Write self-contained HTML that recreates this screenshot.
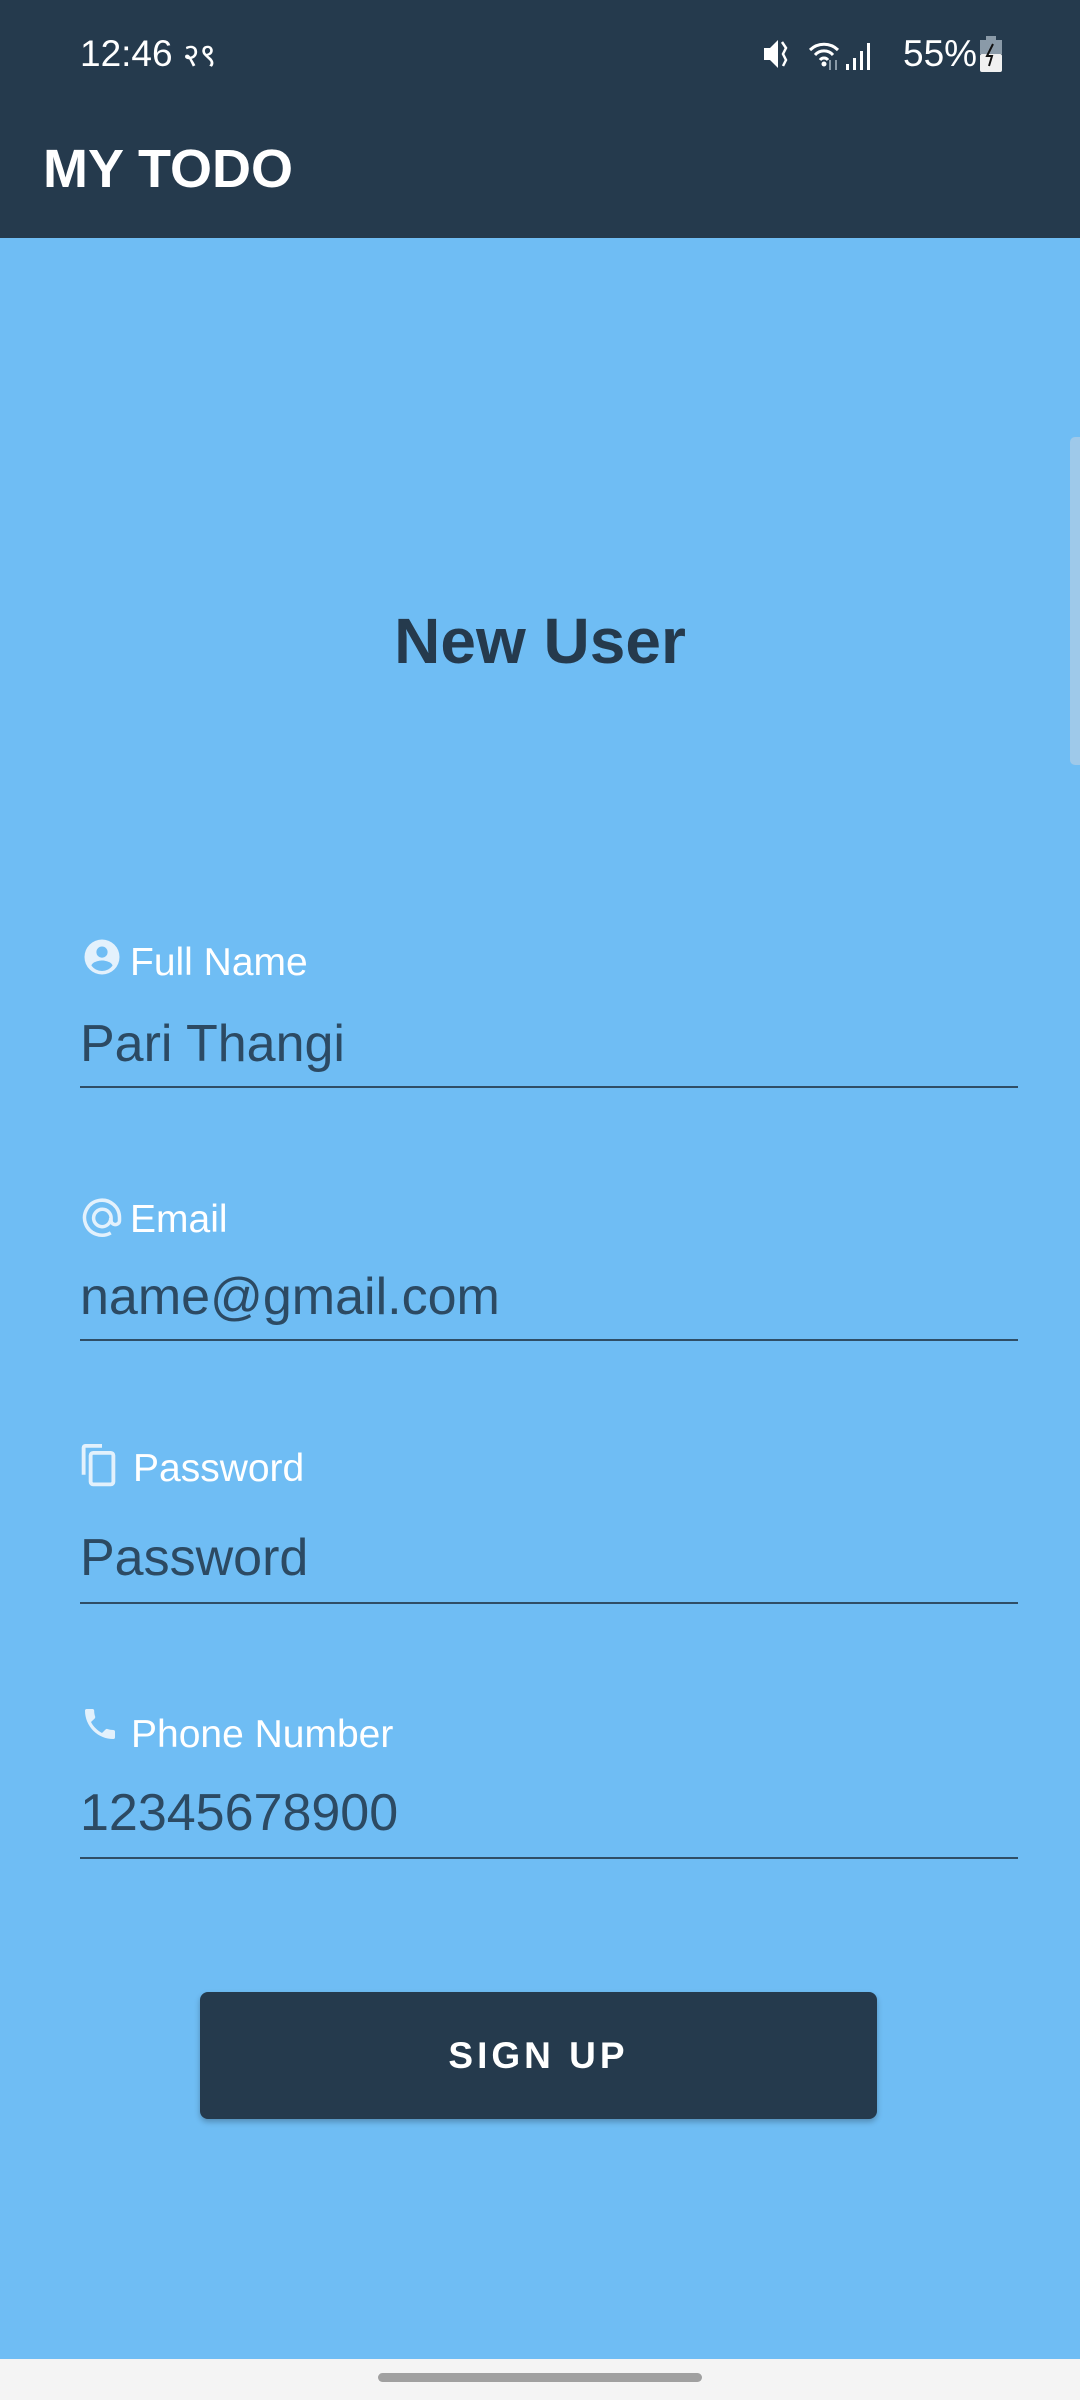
<!DOCTYPE html>
<html><head><meta charset="utf-8"><style>
*{margin:0;padding:0;box-sizing:border-box}
body{width:1080px;height:2400px;background:#6fbdf4;font-family:"Liberation Sans",sans-serif;position:relative;overflow:hidden}
.top{position:absolute;left:0;top:0;width:1080px;height:238px;background:#253a4d}
.abs{position:absolute;white-space:nowrap}
.lbl{color:#fff;font-size:39px;line-height:1}
.val{color:#2c4a63;font-size:52px;line-height:1}
.line{position:absolute;left:80px;width:938px;height:2px;background:#2f4e66}
</style></head><body>
<div class="top"></div>
<div class="abs" style="left:80px;top:33px;color:#fff;font-size:37px;">12:46 <span style="font-family:'DejaVu Sans',sans-serif;font-size:32px">२९</span></div>
<svg class="abs" style="left:760px;top:36px" width="250" height="36" viewBox="0 0 250 36">
<path d="M4 12h6l8-8v28l-8-8H4z" fill="#fff"/><path d="M22 6l4 6-3 6 3 6-3 6" stroke="#fff" stroke-width="2.5" fill="none"/>
<path d="M50 14a20 20 0 0 1 28 0M55 19a12 12 0 0 1 18 0M60 24a5 5 0 0 1 8 0" stroke="#fff" stroke-width="3" fill="none"/><circle cx="64" cy="28" r="2.5" fill="#fff"/>
<path d="M70 24v10M76 34V24" stroke="#8a9aa8" stroke-width="2"/>
<rect x="86" y="28" width="3" height="6" fill="#fff"/><rect x="93" y="22" width="3" height="12" fill="#fff"/><rect x="100" y="15" width="3" height="19" fill="#fff"/><rect x="107" y="7" width="3" height="27" fill="#fff"/>
</svg>
<div class="abs" style="left:903px;top:33px;color:#fff;font-size:37px;">55%</div>
<svg class="abs" style="left:978px;top:36px" width="26" height="36" viewBox="0 0 26 36"><rect x="8" y="0" width="10" height="4" fill="#8a9aa8"/><rect x="2" y="4" width="22" height="14" fill="#8a9aa8"/><rect x="2" y="18" width="22" height="18" rx="2" fill="#f0f0f0"/><path d="M15 8l-6 12h5l-3 10" stroke="#111" stroke-width="2" fill="none"/></svg>
<div class="abs" style="left:43px;top:138px;color:#fff;font-size:54px;font-weight:bold;">MY TODO</div>
<div class="abs" style="left:1070px;top:437px;width:10px;height:328px;background:#9ec9ea;border-radius:5px 0 0 5px"></div>
<div class="abs" style="left:0;width:1080px;top:604px;text-align:center;color:#253a4d;font-size:64px;font-weight:bold;">New User</div>

<svg class="abs" style="left:81px;top:936px" width="42" height="42" viewBox="0 0 24 24"><path fill="#e3f1fc" d="M12 2a10 10 0 1 0 0 20 10 10 0 0 0 0-20zm0 4a3.2 3.2 0 1 1 0 6.4A3.2 3.2 0 0 1 12 6zm0 14a7.7 7.7 0 0 1-6-3c.1-2 4-3 6-3s5.9 1 6 3a7.7 7.7 0 0 1-6 3z"/></svg>
<div class="abs lbl" style="left:130px;top:943px">Full Name</div>
<div class="abs val" style="left:80px;top:1018px">Pari Thangi</div>
<div class="line" style="top:1086px"></div>

<svg class="abs" style="left:81px;top:1197px" width="42" height="42" viewBox="0 0 24 24"><path fill="none" stroke="#e3f1fc" stroke-width="2" d="M17 20.5A10 10 0 1 1 22 12v1.4a2.4 2.4 0 0 1-4.8 0V12A5 5 0 1 0 12 17a5 5 0 0 0 5-5"/></svg>
<div class="abs lbl" style="left:130px;top:1200px">Email</div>
<div class="abs val" style="left:80px;top:1271px">name@gmail.com</div>
<div class="line" style="top:1339px"></div>

<svg class="abs" style="left:81px;top:1443px" width="42" height="46" viewBox="0 0 24 26"><path fill="none" stroke="#e3f1fc" stroke-width="2.2" d="M1.5 18V2.5a1 1 0 0 1 1-1H12"/><rect x="5.5" y="5.5" width="13" height="18" rx="1.5" fill="none" stroke="#e3f1fc" stroke-width="2.2"/></svg>
<div class="abs lbl" style="left:133px;top:1449px">Password</div>
<div class="abs val" style="left:80px;top:1532px">Password</div>
<div class="line" style="top:1602px"></div>

<svg class="abs" style="left:80px;top:1704px" width="40" height="40" viewBox="0 0 24 24"><path fill="#e3f1fc" d="M6.6 10.8c1.4 2.8 3.8 5.1 6.6 6.6l2.2-2.2c.3-.3.7-.4 1-.2 1.1.4 2.3.6 3.6.6.6 0 1 .4 1 1V20c0 .6-.4 1-1 1A17 17 0 0 1 3 4c0-.6.4-1 1-1h3.5c.6 0 1 .4 1 1 0 1.300.2 2.500.6 3.600.1.300 0 .700-.2 1z"/></svg>
<div class="abs lbl" style="left:131px;top:1715px">Phone Number</div>
<div class="abs val" style="left:80px;top:1787px">12345678900</div>
<div class="line" style="top:1857px"></div>

<div class="abs" style="left:200px;top:1992px;width:677px;height:127px;background:#253a4d;border-radius:8px;box-shadow:0 3px 6px rgba(0,0,0,.25);color:#fff;font-size:37px;font-weight:bold;letter-spacing:4px;text-align:center;line-height:127px">SIGN UP</div>

<div class="abs" style="left:0;top:2359px;width:1080px;height:41px;background:#f4f4f4"></div>
<div class="abs" style="left:378px;top:2373px;width:324px;height:9px;border-radius:5px;background:#a0a0a0"></div>
</body></html>
